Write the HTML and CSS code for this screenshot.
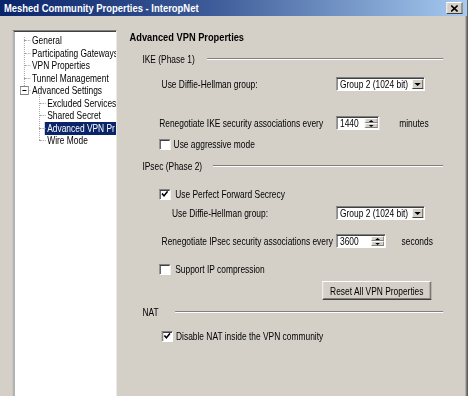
FILE: index.html
```html
<!DOCTYPE html>
<html lang="en">
<head>
  <meta charset="UTF-8">
  <title>Meshed Community Properties</title>
  <link rel="stylesheet" href="styles.css">
</head>
<body>

<div class="screen">
<div class="window">
  <div class="titlebar">
    <span class="title">Meshed Community Properties - InteropNet</span>
    <span class="close-btn">
      <svg width="10" height="7" viewBox="0 0 10 7"><path d="M1 0.5 L9 6.5 M9 0.5 L1 6.5" stroke="#000" stroke-width="1.7"/></svg>
    </span>
  </div>

  <div class="main">
    <div class="tree">
      <ul class="tree-root">
        <li class="tree-item">General</li>
        <li class="tree-item">Participating Gateways</li>
        <li class="tree-item">VPN Properties</li>
        <li class="tree-item">Tunnel Management</li>
        <li class="tree-item"><span class="toggle"></span>Advanced Settings</li>
      </ul>
      <ul class="tree-sub">
        <li class="tree-item">Excluded Services</li>
        <li class="tree-item">Shared Secret</li>
        <li class="tree-item"><span class="selected">Advanced VPN Pr</span></li>
        <li class="tree-item">Wire Mode</li>
      </ul>
    </div>

    <div class="content">
      <div class="page-title">Advanced VPN Properties</div>

      <div class="section s-ike"><span>IKE (Phase 1)</span><span class="rule"></span></div>

      <div class="row r-dh1">
        <span class="label pad-2">Use Diffie-Hellman group:</span>
        <div class="select"><span class="value">Group 2 (1024 bit)</span><span class="drop"><span class="arrow"></span></span></div>
      </div>

      <div class="row r-reneg1">
        <span class="label">Renegotiate IKE security associations every</span>
        <div class="spin spin-1440"><span class="value">1440</span><span class="spin-btns"><span class="up"></span><span class="down"></span></span></div>
        <span class="unit u-min">minutes</span>
      </div>

      <div class="row r-aggr">
        <span class="check"></span>
        <span class="check-label">Use aggressive mode</span>
      </div>

      <div class="section s-ipsec"><span>IPsec (Phase 2)</span><span class="rule"></span></div>

      <div class="row r-pfs">
        <span class="check"><svg width="10" height="8" viewBox="0 0 10 8"><polyline points="1.5,3.5 4,5.8 8.5,1.3" fill="none" stroke="#000" stroke-width="1.8"/></svg></span>
        <span class="check-label wide">Use Perfect Forward Secrecy</span>
      </div>

      <div class="row r-dh2">
        <span class="label pad-13">Use Diffie-Hellman group:</span>
        <div class="select"><span class="value">Group 2 (1024 bit)</span><span class="drop"><span class="arrow"></span></span></div>
      </div>

      <div class="row r-reneg2">
        <span class="label pad-2">Renegotiate IPsec security associations every</span>
        <div class="spin spin-3600"><span class="value">3600</span><span class="spin-btns"><span class="up"></span><span class="down"></span></span></div>
        <span class="unit u-sec">seconds</span>
      </div>

      <div class="row r-ipcomp">
        <span class="check"></span>
        <span class="check-label wide">Support IP compression</span>
      </div>

      <div class="row r-reset">
        <button class="btn">Reset All VPN Properties</button>
      </div>

      <div class="section s-nat"><span>NAT</span><span class="rule"></span></div>

      <div class="row r-nat">
        <span class="check"><svg width="10" height="8" viewBox="0 0 10 8"><polyline points="1.5,3.5 4,5.8 8.5,1.3" fill="none" stroke="#000" stroke-width="1.8"/></svg></span>
        <span class="check-label">Disable NAT inside the VPN community</span>
      </div>
    </div>
  </div>
</div>
</div>

</body>
</html>
```

FILE: styles.css
```css
body {
  margin: 0;
  overflow: hidden;
  background: #d4d0c8;
  font-family: "Liberation Sans", Arial, sans-serif;
  font-size: 10.5px;
  color: #000;
}
.screen {
  width: 468px;
  height: 396px;
  overflow: hidden;
}
/* the old dialog font is narrow, so the whole window is drawn wide and squeezed */
.window {
  width: 585px;
  height: 396px;
  display: flex;
  flex-direction: column;
  overflow: hidden;
  box-sizing: border-box;
  border-right: 1px solid #404040;
  box-shadow: inset -2px 0 #808080;
  transform: scaleX(0.8);
  transform-origin: 0 0;
}
.titlebar {
  height: 16px;
  flex: none;
  display: flex;
  align-items: center;
  justify-content: space-between;
  padding: 0 6px 0 5px;
  background: linear-gradient(to right, #0a246a, #3d5b98 45%, #a6caf0);
}
.title {
  color: #fff;
  font-weight: bold;
  font-size: 11.8px;
}
.close-btn {
  width: 20px;
  height: 12px;
  display: flex;
  align-items: center;
  justify-content: center;
  background: #d4d0c8;
  border: 1px solid;
  border-color: #fff #404040 #404040 #fff;
  box-sizing: border-box;
}
.main {
  flex: 1;
  display: flex;
}

/* tree */
.tree {
  width: 130px;
  height: 390px;
  margin: 14px 0 0 16px;
  padding-top: 3px;
  box-sizing: border-box;
  background: #fff;
  border: 1px solid;
  border-color: #808080 #e8e6e0 #e8e6e0 #808080;
  box-shadow: inset 1px 1px #404040;
  overflow: hidden;
  white-space: nowrap;
}
.tree ul {
  list-style: none;
  margin: 0;
  padding: 0;
  position: relative;
}
.tree-item {
  position: relative;
  height: 12.5px;
  line-height: 12.5px;
}
.tree-item::before {
  content: "";
  position: absolute;
  top: 6px;
  width: 8px;
  border-top: 1px dotted #9a9a9a;
}
.tree-root .tree-item { padding-left: 23px; }
.tree-root .tree-item::before { left: 13px; }
.tree-root::before {
  content: "";
  position: absolute;
  left: 13px;
  top: 3px;
  height: 53px;
  border-left: 1px dotted #9a9a9a;
}
.tree-sub .tree-item { padding-left: 42px; }
.tree-sub .tree-item::before { left: 32px; }
.tree-sub::before {
  content: "";
  position: absolute;
  left: 32px;
  top: -4px;
  height: 47px;
  border-left: 1px dotted #9a9a9a;
}
.toggle {
  position: absolute;
  left: 8px;
  top: 2px;
  width: 11px;
  height: 9px;
  box-sizing: border-box;
  border: 1px solid #808080;
  background: #fff;
  z-index: 1;
}
.toggle::after {
  content: "";
  position: absolute;
  left: 2px;
  top: 3px;
  width: 5px;
  border-top: 1px solid #000;
}
.selected {
  display: inline-block;
  width: 100px;
  height: 13px;
  margin-left: -3px;
  padding: 0 3px;
  background: #0a246a;
  color: #fff;
}

/* content */
.content {
  flex: 1;
  padding: 14px 30px 0 16px;
}
.page-title {
  font-weight: bold;
  font-size: 11.6px;
  height: 14px;
  line-height: 14px;
}
.section {
  display: flex;
  align-items: center;
  height: 14px;
  margin-left: 16px;
}
.rule {
  flex: 1;
  border-top: 1px solid #808080;
  border-bottom: 1px solid #fff;
}
.s-ike { margin-top: 8px; }
.s-ike .rule { margin-left: 16px; }
.s-ipsec { margin-top: 8px; }
.s-ipsec .rule { margin-left: 13px; }
.s-nat { margin-top: 5px; }
.s-nat .rule { margin-left: 21px; }

.row {
  display: flex;
  align-items: center;
  height: 14px;
  margin-left: 37px;
  white-space: nowrap;
}
.label {
  width: 221px;
  flex: none;
  box-sizing: border-box;
}
.pad-2 { padding-left: 3px; }
.pad-13 { padding-left: 16px; }

.r-dh1 { margin-top: 11px; }
.r-reneg1 { margin-top: 25px; }
.r-aggr { margin-top: 7px; }
.r-pfs { margin-top: 14px; }
.r-dh2 { margin-top: 5px; }
.r-reneg2 { margin-top: 14px; }
.r-ipcomp { margin-top: 14px; }
.r-reset { margin-top: 5px; height: 19px; }
.r-nat { margin-top: 10px; margin-left: 40px; }

.select, .spin {
  display: flex;
  height: 14px;
  box-sizing: border-box;
  border: 1px solid;
  border-color: #808080 #fff #fff #808080;
  box-shadow: inset 1px 1px #404040;
  background: #fff;
}
.select { width: 111px; }
.value {
  flex: 1;
  padding-left: 4px;
  line-height: 12px;
  overflow: hidden;
}
.drop {
  width: 14px;
  margin: 1px 1px 1px 0;
  background: #d4d0c8;
  box-sizing: border-box;
  border: 1px solid;
  border-color: #fff #404040 #404040 #fff;
  display: flex;
  align-items: center;
  justify-content: center;
}
.arrow {
  width: 0;
  height: 0;
  border-left: 4px solid transparent;
  border-right: 4px solid transparent;
  border-top: 3px solid #000;
}
.spin-1440 { width: 54px; }
.spin-3600 { width: 62px; }
.spin-btns {
  width: 16px;
  margin: 1px 1px 1px 0;
  display: flex;
  flex-direction: column;
}
.spin-btns span {
  flex: 1;
  background: #d4d0c8;
  border: 1px solid;
  border-color: #fff #808080 #808080 #fff;
  position: relative;
}
.spin-btns .up::after, .spin-btns .down::after {
  content: "";
  position: absolute;
  left: 4px;
  top: 1px;
  border-left: 3px solid transparent;
  border-right: 3px solid transparent;
}
.spin-btns .up::after { border-bottom: 2px solid #000; }
.spin-btns .down::after { border-top: 2px solid #000; }
.u-min { margin-left: 25px; }
.u-sec { margin-left: 20px; }

.check {
  width: 14px;
  height: 11px;
  flex: none;
  box-sizing: border-box;
  border: 1px solid;
  border-color: #808080 #fff #fff #808080;
  box-shadow: inset 1px 1px #404040;
  background: #fff;
  display: flex;
  align-items: center;
  justify-content: center;
}
.check-label { margin-left: 4px; }
.check-label.wide { margin-left: 6px; }

.btn {
  margin-left: 204px;
  width: 136px;
  height: 19px;
  padding: 0;
  font: inherit;
  background: #d4d0c8;
  border: 1px solid;
  border-color: #fff #404040 #404040 #fff;
  box-shadow: inset -1px -1px #808080;
  color: #000;
}
```
